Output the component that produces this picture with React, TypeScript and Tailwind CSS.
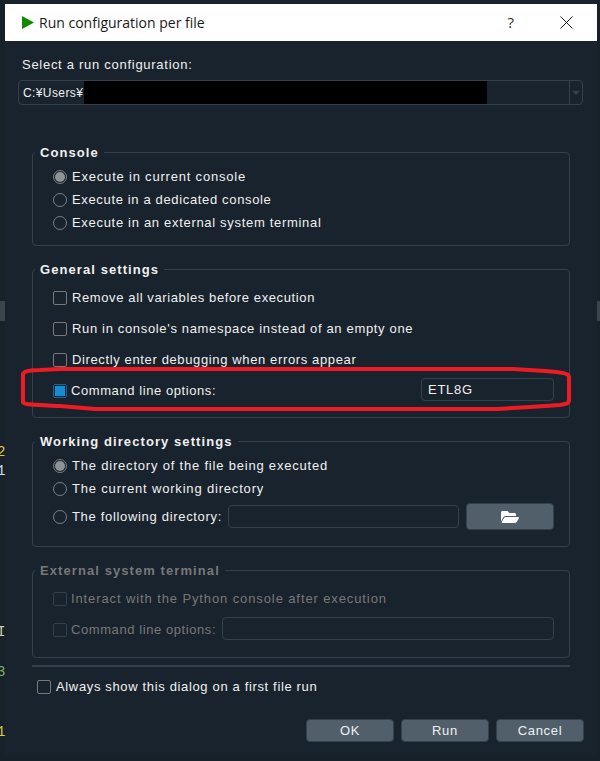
import { ReactNode } from "react"
import { FaFolderOpen } from "react-icons/fa"

const Radio = ({ checked }: { checked?: boolean }) => (
  <span className="flex h-[14px] w-[14px] shrink-0 items-center justify-center rounded-full border border-[#7a8085]">
    {checked && <span className="h-[10px] w-[10px] rounded-full bg-[#8f9396]"></span>}
  </span>
)

const Check = ({ checked, disabled }: { checked?: boolean; disabled?: boolean }) => (
  <span
    className={`flex h-[14px] w-[14px] shrink-0 items-center justify-center rounded-[2px] border ${
      checked ? "border-[#1464a0]" : disabled ? "border-[#32414b]" : "border-[#787878]"
    }`}
  >
    {checked && <span className="h-[10px] w-[10px] bg-[#148cd2]"></span>}
  </span>
)

const Field = ({ className, children }: { className: string; children?: ReactNode }) => (
  <div className={`flex h-[23px] items-center rounded-[4px] border border-[#32414b] px-[6px] ${className}`}>{children}</div>
)

const Group = ({ title, disabled, className, children }: { title: string; disabled?: boolean; className: string; children: ReactNode }) => (
  <section className={`relative ml-[27px] w-[538px] rounded-[4px] border border-[#32414b] pl-[20px] ${className}`}>
    <h2 className={`absolute top-[-9px] left-[2px] bg-[#19232d] px-[5px] text-[13px] leading-[17px] font-bold tracking-[1.08px] ${disabled ? "text-[#787878]" : "text-[#f0f0f0]"}`}>
      {title}
    </h2>
    {children}
  </section>
)

const Row = ({ h, gap, children, muted }: { h: string; gap: string; children: ReactNode; muted?: boolean }) => (
  <div className={`flex items-center ${h} ${gap} ${muted ? "text-[#787878]" : ""}`}>{children}</div>
)

const DialogButton = ({ label }: { label: string }) => (
  <button className="h-[23px] w-[88px] rounded-[4px] border border-[#32414b] bg-[#505f69] text-[13px] tracking-[0.7px] text-[#f0f0f0]">{label}</button>
)

export default function App() {
  return (
    <div className="relative h-[761px] w-[600px] overflow-hidden bg-[#19232d] font-['Liberation_Sans',sans-serif] text-[13px] tracking-[0.72px] text-[#f0f0f0]">
      {/* editor peeking out behind the dialog */}
      <div className="absolute top-0 bottom-0 left-0 w-[5px] bg-[#17212a] font-['Liberation_Mono',monospace] text-[14px] leading-none tracking-normal">
        <div className="absolute top-[301px] left-0 h-[20px] w-[5px] bg-[#3a444c]"></div>
        <span className="absolute top-[445px] left-[-3px] text-[#e0c34a]">2</span>
        <span className="absolute top-[464px] left-[-3px] text-[#d8e0e6]">1</span>
        <span className="absolute top-[625px] left-[-3px] text-[#d8d0b0]">I</span>
        <span className="absolute top-[665px] left-[-3px] text-[#7fb069]">3</span>
        <span className="absolute top-[725px] left-[-3px] text-[#d8d040]">1</span>
      </div>
      <div className="absolute top-0 right-0 bottom-0 w-[3px] bg-[#17212a]">
        <div className="absolute top-[301px] left-0 h-[20px] w-[3px] bg-[#3a444c]"></div>
      </div>
      <div className="absolute right-0 bottom-0 left-0 h-[5px] bg-[#17212a]"></div>

      <div className="relative mt-[4px] ml-[5px] inline-block h-[752px] w-[592px] align-top">
        <header className="flex h-[37px] items-center bg-white font-['Open_Sans',sans-serif] tracking-normal text-[#1a1a1a]">
          <svg className="ml-[17px]" width="12" height="13" viewBox="0 0 12 13">
            <path d="M0 0 L12 6.5 L0 13 Z" fill="#108a00" />
          </svg>
          <span className="ml-[5px] text-[14px]">Run configuration per file</span>
          <span className="ml-auto text-[15px] text-[#333]">?</span>
          <svg className="mr-[24px] ml-[46px]" width="13" height="13" viewBox="0 0 13 13">
            <path d="M0.5 0.5 L12.5 12.5 M12.5 0.5 L0.5 12.5" stroke="#1a1a1a" strokeWidth="1" fill="none" />
          </svg>
        </header>

        <p className="mt-[15px] ml-[17px] leading-[17px]">Select a run configuration:</p>
        <div className="relative mt-[7px] ml-[13px] flex h-[25px] w-[565px] items-center rounded-[4px] border border-[#32414b] pl-[4px] text-[12px] tracking-[0.4px]">
          C:¥Users¥
          <div className="absolute top-0 bottom-0 left-[65px] w-[403px] bg-black"></div>
          <div className="absolute top-0 right-0 bottom-0 flex w-[13px] items-center justify-center border-l border-[#32414b]">
            <span className="h-0 w-0 border-x-[4px] border-t-[4px] border-x-transparent border-t-[#32414b]"></span>
          </div>
        </div>

        <Group title="Console" className="mt-[47px] h-[94px] pt-[12px]">
          <Row h="h-[23px]" gap="gap-[5px]"><Radio checked /><span className="tracking-[0.8px]">Execute in current console</span></Row>
          <Row h="h-[23px]" gap="gap-[5px]"><Radio /><span className="tracking-[0.65px]">Execute in a dedicated console</span></Row>
          <Row h="h-[23px]" gap="gap-[5px]"><Radio /><span className="tracking-[0.69px]">Execute in an external system terminal</span></Row>
        </Group>

        <Group title="General settings" className="mt-[23px] h-[149px] pt-[12px]">
          <Row h="h-[31px]" gap="gap-[5px]"><Check /><span className="tracking-[0.61px]">Remove all variables before execution</span></Row>
          <Row h="h-[31px]" gap="gap-[5px]"><Check /><span className="tracking-[0.66px]">Run in console's namespace instead of an empty one</span></Row>
          <Row h="h-[31px]" gap="gap-[5px]"><Check /><span className="tracking-[0.63px]">Directly enter debugging when errors appear</span></Row>
          <Row h="h-[31px]" gap="gap-[4px]">
            <Check checked />
            <span className="tracking-[0.58px]">Command line options:</span>
            <Field className="mr-[15px] mb-[2px] ml-auto w-[133px]">ETL8G</Field>
          </Row>
        </Group>

        <Group title="Working directory settings" className="mt-[23px] h-[106px] pt-[12px]">
          <Row h="h-[23px]" gap="gap-[5px]"><Radio checked /><span className="tracking-[0.8px]">The directory of the file being executed</span></Row>
          <Row h="h-[23px]" gap="gap-[5px]"><Radio /><span className="tracking-[0.82px]">The current working directory</span></Row>
          <Row h="h-[27px] mt-[3px]" gap="gap-[5px]">
            <Radio />
            <span className="tracking-[0.68px]">The following directory:</span>
            <Field className="ml-[1px] w-[231px]"></Field>
            <button className="ml-[2px] flex h-[27px] w-[88px] items-center justify-center rounded-[4px] border border-[#32414b] bg-[#505f69] text-[18px] text-white">
              <FaFolderOpen />
            </button>
          </Row>
        </Group>

        <Group title="External system terminal" disabled className="mt-[23px] h-[88px] pt-[12px]">
          <Row h="h-[31px]" gap="gap-[4px]" muted><Check disabled /><span className="tracking-[0.89px]">Interact with the Python console after execution</span></Row>
          <Row h="h-[31px]" gap="gap-[4px]" muted>
            <Check disabled />
            <span className="tracking-[0.58px]">Command line options:</span>
            <Field className="mb-[2px] ml-[2px] w-[332px]"></Field>
          </Row>
        </Group>

        <div className="mt-[7px] ml-[27px] h-[2px] w-[538px] bg-[#32414b]"></div>

        <div className="mt-[11px] ml-[32px] flex h-[17px] items-center gap-[5px]"><Check /><span className="tracking-[0.65px]">Always show this dialog on a first file run</span></div>

        <div className="mt-[24px] mr-[13px] flex justify-end gap-[7px]">
          <DialogButton label="OK" />
          <DialogButton label="Run" />
          <DialogButton label="Cancel" />
        </div>
      </div>

      {/* hand drawn red marker around the option */}
      <svg className="absolute top-0 left-0" width="600" height="761" viewBox="0 0 600 761" fill="none">
        <path
          d="M40 370 C30 370 24 371 23 374 L23 402 C24 405 35 405 60 406 L95 409 L497 409 L530 407 L560 405 C567 404 569 403 569 400 L569 377 C569 373 560 372 545 371 L513 369 L60 369 Z"
          stroke="#ed1c24"
          strokeWidth="4"
          strokeLinejoin="round"
        />
      </svg>
    </div>
  )
}
